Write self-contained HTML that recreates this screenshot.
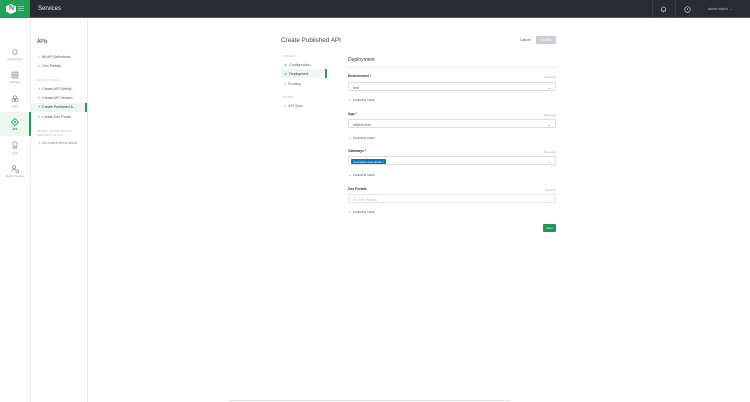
<!DOCTYPE html>
<html><head><meta charset="utf-8"><style>
*{margin:0;padding:0;box-sizing:border-box}
body{width:750px;height:402px;position:relative;overflow:hidden;background:#fff;font-family:"Liberation Sans",sans-serif;color:#333}
.a{position:absolute}
.t{font-size:3.6px;color:#555;white-space:nowrap}
.lbl{font-size:3.4px;font-weight:bold;color:#333}
.req{font-size:3px;color:#aaa}
.inp{position:absolute;left:348px;width:208px;height:9px;border:1px solid #ddd;border-radius:1px;font-size:3.6px;color:#555;padding:2.5px 4px}
.chev{position:absolute;right:4px;top:2px;font-size:4px;color:#666}
.cn{font-size:3px;color:#444;letter-spacing:.2px}
.ic{position:absolute;left:11px;width:8px;height:8px}
</style></head><body>
<div class="a" style="left:0;top:0;width:750px;height:18px;background:#2a2b31;border-bottom:1px solid #555"></div>
<div class="a" style="left:0;top:0;width:30px;height:18px;background:#23a057"></div>
<div class="a" style="left:6px;top:4px;width:10px;height:10px;background:#fff;clip-path:polygon(50% 0,100% 25%,100% 75%,50% 100%,0 75%,0 25%)"></div>
<div class="a" style="left:9px;top:5px;font-size:7px;font-weight:bold;color:#23a057">N</div>
<div class="a" style="left:18px;top:6px;width:6px;height:1px;background:#7fcf9e;box-shadow:0 2px 0 #7fcf9e,0 4px 0 #7fcf9e"></div>
<div class="a" style="left:38px;top:6px;font-size:6px;color:#eee">Services</div>
<div class="a" style="left:652px;top:0;width:1px;height:18px;background:#3c3d44"></div>
<div class="a" style="left:675px;top:0;width:1px;height:18px;background:#3c3d44"></div>
<svg class="a" style="left:660px;top:6px" width="7" height="7" viewBox="0 0 7 7"><path d="M1.5 5V3a2 2 0 0 1 4 0v2H1M3 6h1" stroke="#ccc" stroke-width=".7" fill="none"/></svg>
<svg class="a" style="left:684px;top:6px" width="7" height="7" viewBox="0 0 7 7"><circle cx="3.5" cy="3.5" r="2.8" stroke="#ccc" stroke-width=".7" fill="none"/><path d="M3.5 2v2" stroke="#ccc" stroke-width=".7"/></svg>
<div class="a" style="left:708px;top:7px;font-size:3.5px;color:#bbb">admin admin &nbsp;⌄</div>
<!-- rail -->
<div class="a" style="left:30px;top:19px;width:1px;height:383px;background:#eee"></div>
<div class="a" style="left:87px;top:19px;width:1px;height:383px;background:#e8e8e8"></div>
<div class="a" style="left:0;top:112px;width:30px;height:24px;background:#eef7f1"></div>
<div class="a" style="left:29px;top:112px;width:2px;height:24px;background:#23a057"></div>
<svg class="ic" style="top:48px" viewBox="0 0 8 8"><path d="M2 6V3.5a2 2 0 0 1 4 0V6H1.5M3.5 7h1" stroke="#777" stroke-width=".6" fill="none"/></svg>
<div class="a t" style="left:0;width:30px;text-align:center;top:58px;font-size:2.5px;color:#999">Environments</div>
<svg class="ic" style="top:71px" viewBox="0 0 8 8"><path d="M1 1h6v6H1zM3 1v6M5 1v6M1 4h6" stroke="#777" stroke-width=".6" fill="none"/></svg>
<div class="a t" style="left:0;width:30px;text-align:center;top:81px;font-size:2.5px;color:#999">Gateways</div>
<svg class="ic" style="top:95px" viewBox="0 0 8 8"><circle cx="4" cy="2.6" r="1.8" stroke="#777" stroke-width=".6" fill="none"/><circle cx="2.6" cy="5.2" r="1.8" stroke="#777" stroke-width=".6" fill="none"/><circle cx="5.4" cy="5.2" r="1.8" stroke="#777" stroke-width=".6" fill="none"/></svg>
<div class="a t" style="left:0;width:30px;text-align:center;top:105px;font-size:2.5px;color:#999">Apps</div>
<svg class="ic" style="top:118px" viewBox="0 0 8 8"><path d="M4 .5L7.5 4 4 7.5.5 4z" stroke="#23a057" stroke-width=".8" fill="none"/><circle cx="4" cy="4" r="1" fill="#23a057"/></svg>
<div class="a t" style="left:0;width:30px;text-align:center;top:128px;font-size:2.5px;color:#333">APIs</div>
<svg class="ic" style="top:141px" viewBox="0 0 8 8"><circle cx="4" cy="3" r="2.2" stroke="#777" stroke-width=".6" fill="none"/><path d="M2.8 5v2.5L4 6.7l1.2.8V5" stroke="#777" stroke-width=".6" fill="none"/></svg>
<div class="a t" style="left:0;width:30px;text-align:center;top:152px;font-size:2.5px;color:#999">Certs</div>
<svg class="ic" style="top:165px" viewBox="0 0 8 8"><circle cx="3" cy="2.2" r="1.5" stroke="#777" stroke-width=".6" fill="none"/><path d="M.8 6.5a2.3 2.3 0 0 1 4-1.5M5 5h2.5v2.5H5z" stroke="#777" stroke-width=".6" fill="none"/></svg>
<div class="a t" style="left:0;width:30px;text-align:center;top:175px;font-size:2.5px;color:#999">Identity Providers</div>
<!-- sidebar -->
<div class="a" style="left:37px;top:39px;font-size:5px;color:#333">APIs</div>
<div class="a t" style="left:38px;top:55px">◌ &nbsp;All API Definitions</div>
<div class="a t" style="left:38px;top:64px">‹› &nbsp;Dev Portals</div>
<div class="a t" style="left:37px;top:78px;font-size:2.8px;color:#bbb">QUICK ACTIONS</div>
<div class="a t" style="left:38px;top:87px">+ &nbsp;Create API Definiti...</div>
<div class="a t" style="left:38px;top:96px">+ &nbsp;Create API Version</div>
<div class="a" style="left:31px;top:103px;width:56px;height:9px;background:#eef7f1"></div>
<div class="a" style="left:85px;top:103px;width:2px;height:9px;background:#23a057"></div>
<div class="a t" style="left:38px;top:105px;color:#333">+ &nbsp;Create Published A...</div>
<div class="a t" style="left:38px;top:115px">+ &nbsp;Create Dev Portal</div>
<div class="a t" style="left:37px;top:129px;font-size:2.8px;color:#bbb;line-height:4.4px">RECENT API DEFINITIONS<br>AND DEV PORTALS</div>
<div class="a t" style="left:38px;top:141px;color:#888">▯ &nbsp;No recent items found</div>
<!-- main -->
<div class="a" style="left:281px;top:37px;font-size:6.3px;color:#444">Create Published API</div>
<div class="a t" style="left:520px;top:38px;font-size:3.4px">Cancel</div>
<div class="a" style="left:536px;top:36px;width:20px;height:8px;background:#ccced6;border-radius:1px;font-size:3.2px;color:#fff;text-align:center;line-height:8px">Submit</div>
<div class="a t" style="left:283px;top:55px;font-size:2.7px;color:#bbb">GENERAL</div>
<div class="a t" style="left:284px;top:63px;color:#666"><span style="color:#7bc99a">◉</span> &nbsp;Configuration</div>
<div class="a" style="left:281px;top:69px;width:45px;height:9px;background:#eef7f1"></div>
<div class="a" style="left:325px;top:69px;width:2px;height:9px;background:#23a057"></div>
<div class="a t" style="left:284px;top:72px;color:#333"><span style="color:#7bc99a">◉</span> &nbsp;Deployment</div>
<div class="a t" style="left:284px;top:82px;color:#666">○ &nbsp;Routing</div>
<div class="a t" style="left:283px;top:96px;font-size:2.7px;color:#bbb">REVIEW</div>
<div class="a t" style="left:284px;top:104px;color:#666">○ &nbsp;API Spec</div>
<div class="a" style="left:348px;top:57px;font-size:5px;color:#444">Deployment</div>
<div class="a" style="left:348px;top:67px;width:208px;height:1px;background:#eee"></div>

<div class="a lbl" style="left:348px;top:74px">Environment *</div><div class="a req" style="left:544px;top:75px">Required</div>
<div class="inp" style="top:82px">test<span class="chev">⌄</span></div>
<div class="a cn" style="left:349px;top:98px">+ &nbsp;CREATE NEW</div>

<div class="a lbl" style="left:348px;top:112px">App *</div><div class="a req" style="left:544px;top:113px">Required</div>
<div class="inp" style="top:119px">httpbin-test<span class="chev">⌄</span></div>
<div class="a cn" style="left:349px;top:136px">+ &nbsp;CREATE NEW</div>

<div class="a lbl" style="left:348px;top:149px">Gateways *</div><div class="a req" style="left:544px;top:150px">Required</div>
<div class="inp" style="top:156px;padding:2px 2px"><span style="display:inline-block;background:#0b72c4;color:#fff;font-size:2.8px;padding:.5px 2px;border-radius:1px">test-httpbin-internal-lab ×</span><span class="chev">⌄</span></div>
<div class="a cn" style="left:349px;top:173px">+ &nbsp;CREATE NEW</div>

<div class="a lbl" style="left:348px;top:187px">Dev Portals</div><div class="a req" style="left:545px;top:188px">Optional</div>
<div class="inp" style="top:194px;color:#bbb;border-color:#e6e6e6">No Dev Portals<span class="chev" style="color:#ccc">⌄</span></div>
<div class="a cn" style="left:349px;top:210px">+ &nbsp;CREATE NEW</div>

<div class="a" style="left:543px;top:224px;width:13px;height:8px;background:#23955a;border-radius:1px;font-size:3px;color:#fff;text-align:center;line-height:8px">Next</div>
<div class="a" style="left:229px;top:400px;width:281px;height:1px;background:#e4e4e4"></div>
</body></html>
